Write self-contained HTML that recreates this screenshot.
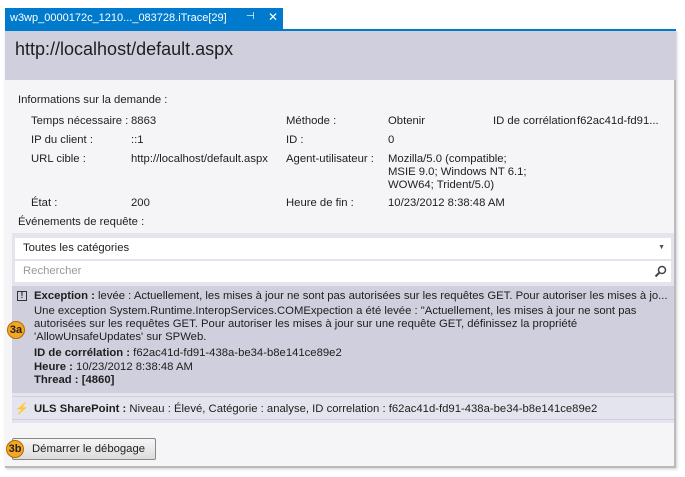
<!DOCTYPE html>
<html><head><meta charset="utf-8"><style>
*{margin:0;padding:0;box-sizing:border-box}
body{width:685px;height:477px;background:#fff;font-family:"Liberation Sans",sans-serif;font-size:11.3px;color:#1e1e1e;position:relative;overflow:hidden}
.abs{position:absolute;white-space:nowrap}
#panel{position:absolute;left:5px;top:30px;width:671px;height:438px;background:#f5f5f7;border-right:2px solid #bbb;border-bottom:2px solid #bbb;box-shadow:1px 1px 3px #ccc}
#tab{position:absolute;left:5px;top:8px;width:278px;height:22px;background:#007acc;color:#fff;font-size:11px;padding:4px 0 0 5px}
#tabline{position:absolute;left:5px;top:29px;width:671px;height:2px;background:#007acc}
#hdr{position:absolute;left:5px;top:31px;width:671px;height:49px;background:#cfcfdd}
.badge{position:absolute;width:18px;height:18px;border-radius:50%;background:#f5a623;border:1px solid #b36b00;font-size:11px;font-weight:bold;color:#222;text-align:center;line-height:16px}
</style></head><body>
<div id="panel"></div>
<div id="tab">w3wp_0000172c_1210..._083728.iTrace[29]<span style="position:absolute;left:241px;top:3px;font-size:10px">⊣</span><span style="position:absolute;left:263px;top:2px;font-size:12px">✕</span></div>
<div id="tabline"></div>
<div id="hdr"></div>
<div class="abs" style="left:15px;top:39px;font-size:18px;color:#1e1e1e">http://localhost/default.aspx</div>

<div class="abs" style="left:18px;top:94px">Informations sur la demande :</div>
<div class="abs" style="left:31px;top:115px">Temps nécessaire :</div><div class="abs" style="left:131px;top:115px">8863</div>
<div class="abs" style="left:286px;top:115px">Méthode :</div><div class="abs" style="left:388px;top:115px">Obtenir</div>
<div class="abs" style="left:493px;top:115px">ID de corrélation</div><div class="abs" style="left:577px;top:115px">f62ac41d-fd91...</div>
<div class="abs" style="left:31px;top:134px">IP du client :</div><div class="abs" style="left:131px;top:134px">::1</div>
<div class="abs" style="left:286px;top:134px">ID :</div><div class="abs" style="left:388px;top:134px">0</div>
<div class="abs" style="left:31px;top:153px">URL cible :</div><div class="abs" style="left:131px;top:153px">http://localhost/default.aspx</div>
<div class="abs" style="left:286px;top:153px">Agent-utilisateur :</div>
<div class="abs" style="left:388px;top:153px;line-height:13px">Mozilla/5.0 (compatible;<br>MSIE 9.0; Windows NT 6.1;<br>WOW64; Trident/5.0)</div>
<div class="abs" style="left:31px;top:197px">État :</div><div class="abs" style="left:131px;top:197px">200</div>
<div class="abs" style="left:286px;top:197px">Heure de fin :</div><div class="abs" style="left:388px;top:197px">10/23/2012 8:38:48 AM</div>
<div class="abs" style="left:18px;top:216px">Événements de requête :</div>

<div class="abs" style="left:12px;top:233px;width:662px;height:190px;background:#e4e4ee"></div>
<div class="abs" style="left:15px;top:238px;width:656px;height:21px;background:#fff;padding:4px 0 0 8px">Toutes les catégories<span style="position:absolute;right:6px;top:6px;font-size:7px;color:#555">▼</span></div>
<div class="abs" style="left:15px;top:261px;width:656px;height:21px;background:#fff;padding:4px 0 0 8px;color:#999">Rechercher
<svg style="position:absolute;right:4px;top:4px" width="13" height="13" viewBox="0 0 13 13"><circle cx="8" cy="5" r="3.5" fill="none" stroke="#444" stroke-width="1.5"/><line x1="5.5" y1="7.5" x2="1.5" y2="11.5" stroke="#444" stroke-width="2"/></svg></div>
<div class="abs" style="left:12px;top:286px;width:662px;height:107px;background:#cfcfdd"></div>
<div class="abs" style="left:17px;top:291px;width:10px;height:10px;border:1px solid #333;font-size:8px;font-weight:bold;text-align:center;line-height:8px">!</div>
<div class="abs" style="left:34px;top:290px;line-height:13px"><b>Exception :</b> levée : Actuellement, les mises à jour ne sont pas autorisées sur les requêtes GET. Pour autoriser les mises à jo...</div>
<div class="abs" style="left:34px;top:305px;line-height:13px">Une exception System.Runtime.InteropServices.COMExpection a été levée : "Actuellement, les mises à jour ne sont pas<br>autorisées sur les requêtes GET. Pour autoriser les mises à jour sur une requête GET, définissez la propriété<br>'AllowUnsafeUpdates' sur SPWeb.</div>
<div class="abs" style="left:34px;top:347px;line-height:13.5px"><b>ID de corrélation :</b> f62ac41d-fd91-438a-be34-b8e141ce89e2<br><b>Heure :</b> 10/23/2012 8:38:48 AM<br><b>Thread : [4860]</b></div>
<div class="badge" style="left:7px;top:321px">3a</div>
<div class="abs" style="left:12px;top:396px;width:662px;height:1px;background:#d0d0dc"></div>
<div class="abs" style="left:12px;top:419px;width:662px;height:1px;background:#d0d0dc"></div>
<div class="abs" style="left:15px;top:402px;color:#e8a020;font-size:11px">⚡</div>
<div class="abs" style="left:34px;top:403px"><b>ULS SharePoint :</b> Niveau : Élevé, Catégorie : analyse, ID correlation : f62ac41d-fd91-438a-be34-b8e141ce89e2</div>
<div class="abs" style="left:12px;top:438px;width:144px;height:22px;border:1px solid #888;border-radius:2px;background:linear-gradient(#f6f6f6,#dcdcdc);padding:4px 0 0 19px">Démarrer le débogage</div>
<div class="badge" style="left:6px;top:440px">3b</div>
</body></html>
